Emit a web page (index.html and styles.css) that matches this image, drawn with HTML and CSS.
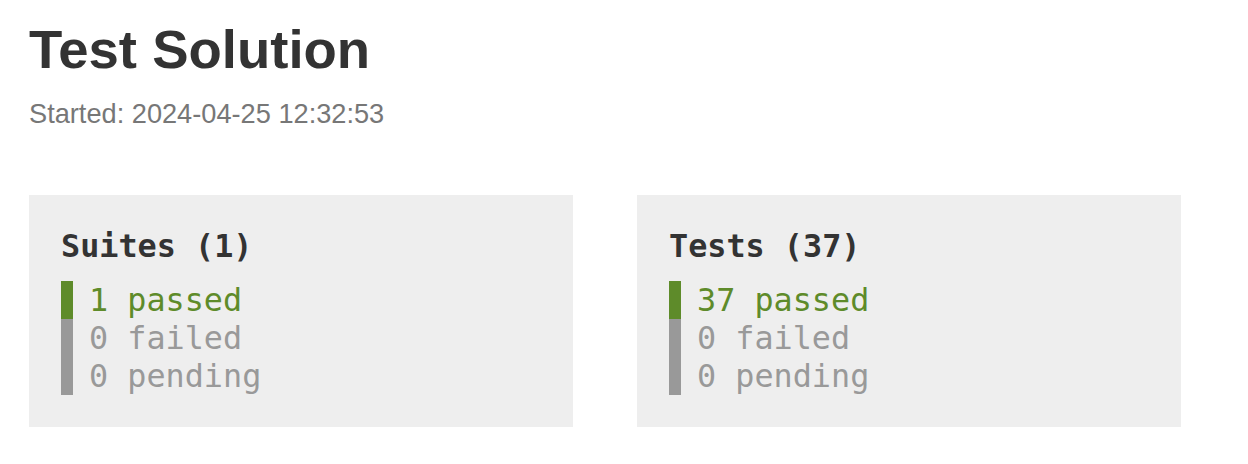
FILE: index.html
```html
<!DOCTYPE html>
<html lang="en">
<head>
<meta charset="utf-8">
<title>Test Solution</title>
<link rel="stylesheet" href="styles.css">
</head>
<body>
  <header class="page-header">
    <h1 class="title">Test Solution</h1>
    <div class="started">Started: 2024-04-25 12:32:53</div>
  </header>
  <section class="summary">
    <div class="summary-box">
      <div class="summary-title">Suites (1)</div>
      <ul class="summary-list">
        <li class="item passed">1 passed</li>
        <li class="item other">0 failed</li>
        <li class="item other">0 pending</li>
      </ul>
    </div>
    <div class="summary-box">
      <div class="summary-title">Tests (37)</div>
      <ul class="summary-list">
        <li class="item passed">37 passed</li>
        <li class="item other">0 failed</li>
        <li class="item other">0 pending</li>
      </ul>
    </div>
  </section>
</body>
</html>
```
FILE: styles.css
```css
html, body {
  margin: 0;
  padding: 0;
  background: #ffffff;
}
body {
  padding: 19px 29px 0 29px;
  font-family: "Liberation Sans", Arial, sans-serif;
  color: #333333;
}
.page-header {
  display: flex;
  flex-direction: column;
}
.title {
  margin: 0;
  font-size: 54.5px;
  line-height: 61px;
  font-weight: bold;
  color: #333333;
}
.started {
  margin-top: 18px;
  font-size: 27.2px;
  line-height: 31px;
  color: #777777;
}
.summary {
  margin-top: 66px;
  display: grid;
  grid-template-columns: 544px 544px;
  column-gap: 64px;
}
.summary-box {
  background: #eeeeee;
  padding: 32px;
  font-family: "DejaVu Sans Mono", monospace;
  font-size: 31.8px;
}
.summary-title {
  font-weight: bold;
  line-height: 38px;
  color: #333333;
}
.summary-list {
  list-style: none;
  margin: 16px 0 0 0;
  padding: 0;
}
.item {
  line-height: 38px;
  padding-left: 16px;
  border-left: 12px solid #999999;
  color: #999999;
}
.item.passed {
  color: #5e8b2a;
  border-left-color: #5e8b2a;
}
```
